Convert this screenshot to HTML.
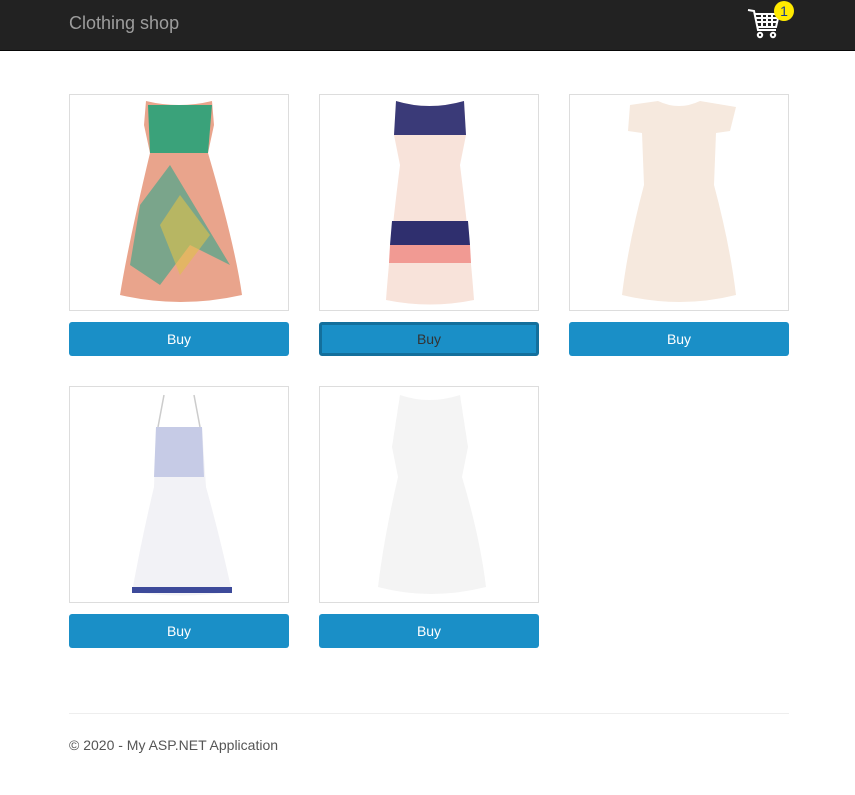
<!DOCTYPE html>
<html><head><style>
body{margin:0;font-family:"Liberation Sans",sans-serif;background:#fff;width:855px;height:795px;overflow:hidden;position:relative}
.nav{position:absolute;left:0;top:0;width:855px;height:50px;background:#222;border-bottom:1px solid #080808}
.brand{position:absolute;left:69px;top:13px;font-size:18px;color:#9d9d9d}
.box{position:absolute;width:218px;height:215px;border:1px solid #ddd;background:#fff}
.btn{position:absolute;width:220px;height:34px;background:#1a8fc7;border-radius:3px;color:#fff;font-size:14px;text-align:center;line-height:34px}
.btn.f{box-sizing:border-box;border:3px solid #136f9c;color:#333;line-height:28px}
.box svg{position:absolute;left:0;top:0}
hr{position:absolute;left:69px;top:713px;width:720px;margin:0;border:0;border-top:1px solid #eee}
.foot{position:absolute;left:69px;top:737px;font-size:14px;color:#555}
</style></head><body>
<div class="nav"><div class="brand">Clothing shop</div>
<svg style="position:absolute;left:744px;top:0" width="56" height="42" viewBox="0 0 56 42">
<g fill="none" stroke="#fff" stroke-width="2">
<path d="M4 10 L10 11 L14 30 L32 30"/>
<path d="M11 14 L35 14 L32 27 L13 27"/>
<path d="M12 18 H34 M12.5 22 H33 M18 14 V27 M23 14 V27 M28 14 V27"/>
<circle cx="16" cy="35" r="2.2"/><circle cx="29" cy="35" r="2.2"/>
</g>
<circle cx="40" cy="11" r="10" fill="#ffea00"/>
<text x="40" y="16" font-size="14" text-anchor="middle" fill="#1a3b8c" font-family="Liberation Sans">1</text>
</svg></div>

<div class="box" style="left:69px;top:94px"><svg width="218" height="215">
<path d="M76 6 Q109 14 142 6 L144 30 L138 58 Q165 150 172 200 Q110 214 50 200 Q58 150 80 58 L74 30Z" fill="#e9a48c"/>
<path d="M78 10 L142 10 L138 58 L80 58Z" fill="#3aa27a"/>
<path d="M70 110 L100 70 L130 120 L160 170 L120 150 L90 190 L60 170Z" fill="#4aa58a" opacity=".7"/>
<path d="M90 130 L110 100 L140 140 L110 180Z" fill="#dfc24a" opacity=".6"/>
</svg></div>
<div class="box" style="left:319px;top:94px"><svg width="218" height="215">
<path d="M76 6 Q109 16 144 6 L146 40 L140 70 Q150 150 154 205 Q110 214 66 205 Q70 150 80 70 L74 40Z" fill="#f8e3da"/>
<path d="M76 6 Q109 16 144 6 L146 40 L74 40Z" fill="#3a3a78"/>
<path d="M72 126 L148 126 L150 150 L70 150Z" fill="#2f2f6e"/>
<path d="M70 150 L150 150 L151 168 L69 168Z" fill="#f19a93"/>
</svg></div>
<div class="box" style="left:569px;top:94px"><svg width="218" height="215">
<path d="M60 10 L88 6 Q109 16 130 6 L166 12 L160 36 L146 38 L144 90 Q160 150 166 200 Q110 214 52 200 Q58 150 74 90 L72 38 L58 36Z" fill="#f6e9de"/>
</svg></div>
<div class="btn" style="left:69px;top:322px">Buy</div>
<div class="btn f" style="left:319px;top:322px">Buy</div>
<div class="btn" style="left:569px;top:322px">Buy</div>

<div class="box" style="left:69px;top:386px"><svg width="218" height="215">
<path d="M86 40 L132 40 L136 100 Q150 150 162 205 Q110 212 62 205 Q72 150 84 100Z" fill="#f2f2f6"/>
<path d="M86 40 L132 40 L134 90 L84 90Z" fill="#c6cbe6"/>
<path d="M62 200 L162 200 L162 206 L62 206Z" fill="#3d4a9a"/>
<path d="M88 40 L94 8 M130 40 L124 8" stroke="#ccc" stroke-width="1.5"/>
</svg></div>
<div class="box" style="left:319px;top:386px"><svg width="218" height="215">
<path d="M80 8 Q109 18 140 8 L148 60 L142 90 Q160 150 166 200 Q110 214 58 200 Q64 150 78 90 L72 60Z" fill="#f4f4f4"/>
</svg></div>
<div class="btn" style="left:69px;top:614px">Buy</div>
<div class="btn" style="left:319px;top:614px">Buy</div>

<hr>
<div class="foot">© 2020 - My ASP.NET Application</div>
</body></html>
